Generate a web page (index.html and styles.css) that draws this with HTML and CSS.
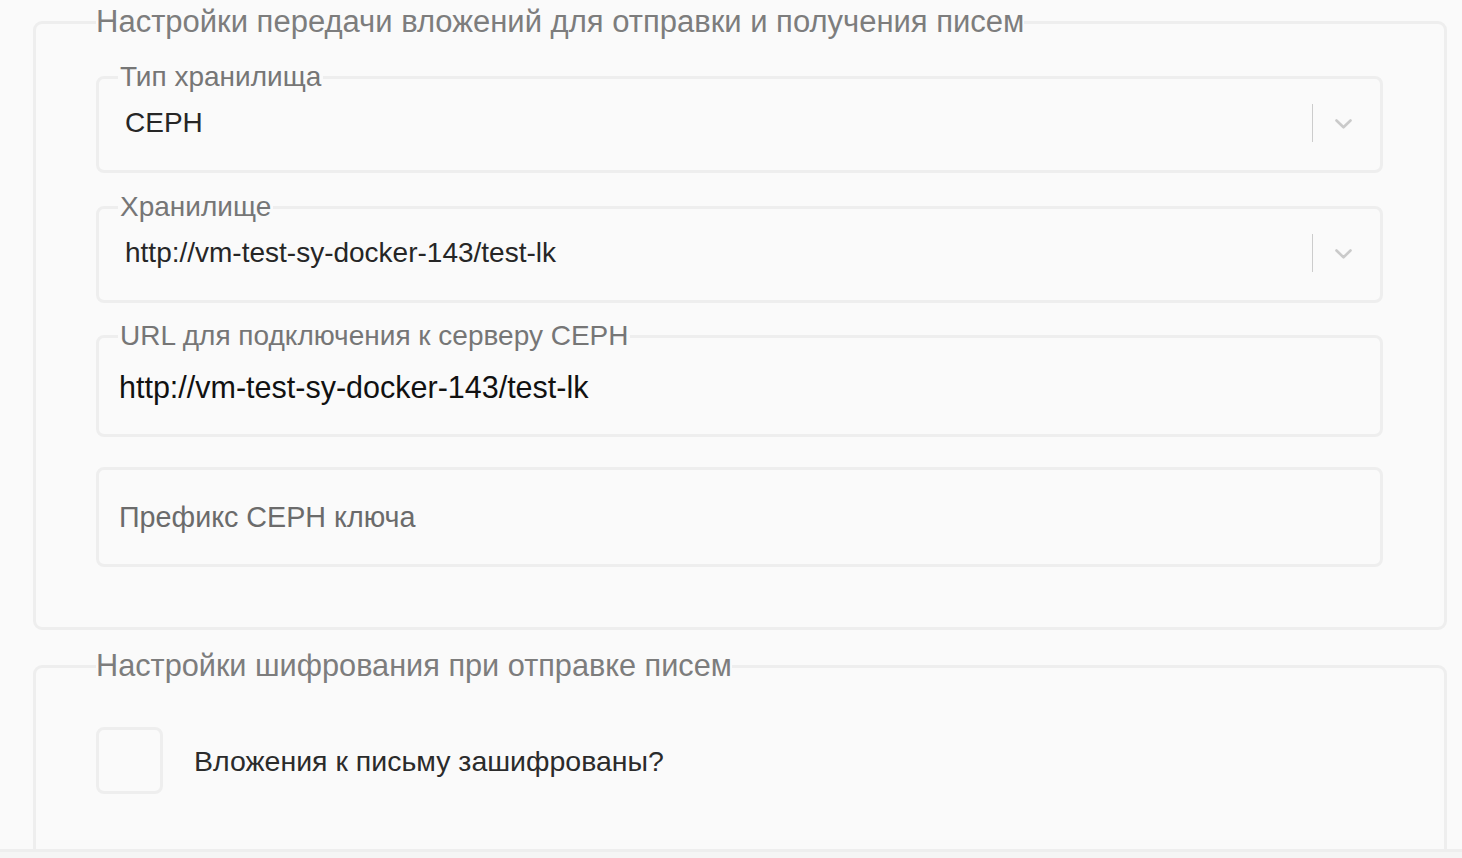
FILE: index.html
```html
<!DOCTYPE html>
<html lang="ru">
<head>
<meta charset="utf-8">
<title>Настройки</title>
<link rel="stylesheet" href="styles.css">
</head>
<body>
<div class="page">
  <fieldset class="group group-attach">
    <legend class="group-title">Настройки передачи вложений для отправки и получения писем</legend>

    <fieldset class="field field-select">
      <legend class="field-label">Тип хранилища</legend>
      <div class="select-row">
        <span class="select-value">CEPH</span>
        <span class="indicators">
          <span class="sep"></span>
          <svg class="chev" width="17" height="10" viewBox="0 0 17 10"><polyline points="1.5,1.5 8.5,8.3 15.5,1.5" fill="none" stroke="#cacaca" stroke-width="2.6" stroke-linecap="round" stroke-linejoin="round"/></svg>
        </span>
      </div>
    </fieldset>

    <fieldset class="field field-select field-storage">
      <legend class="field-label">Хранилище</legend>
      <div class="select-row">
        <span class="select-value">http://vm-test-sy-docker-143/test-lk</span>
        <span class="indicators">
          <span class="sep"></span>
          <svg class="chev" width="17" height="10" viewBox="0 0 17 10"><polyline points="1.5,1.5 8.5,8.3 15.5,1.5" fill="none" stroke="#cacaca" stroke-width="2.6" stroke-linecap="round" stroke-linejoin="round"/></svg>
        </span>
      </div>
    </fieldset>

    <fieldset class="field field-input">
      <legend class="field-label">URL для подключения к серверу CEPH</legend>
      <div class="input-value">http://vm-test-sy-docker-143/test-lk</div>
    </fieldset>

    <div class="field field-plain">
      <div class="placeholder">Префикс CEPH ключа</div>
    </div>
  </fieldset>

  <fieldset class="group group-crypt">
    <legend class="group-title">Настройки шифрования при отправке писем</legend>
    <label class="check-row">
      <span class="checkbox"></span>
      <span class="check-label">Вложения к письму зашифрованы?</span>
    </label>
  </fieldset>
</div>
<div class="footer-bar"></div>
</body>
</html>
```

FILE: styles.css
```css
html, body {
  margin: 0;
  padding: 0;
  background: #fafafa;
  font-family: "Liberation Sans", Arial, Helvetica, sans-serif;
  overflow: hidden;
}

.page {
  height: 849px;
  overflow: hidden;
  padding-top: 4px;
  box-sizing: border-box;
}

.group {
  margin: 0 15px 0 33px;
  border: 3px solid #eeeeee;
  border-radius: 9px;
  padding: 21px 61px 60px 60px;
  min-width: 0;
}

.group-title {
  padding: 0;
  font-size: 31px;
  line-height: 36px;
  color: #7d7d7d;
}

.field {
  margin: 0;
  border: 3px solid #eeeeee;
  border-radius: 8px;
  min-width: 0;
  box-sizing: border-box;
}

.field-label {
  padding: 0 2px;
  font-size: 28px;
  line-height: 32px;
  color: #767676;
}

.field-select {
  padding: 11px 0 28px 19px;
}

.field-storage {
  margin-top: 18px;
}

.select-row {
  display: flex;
  align-items: center;
  height: 38px;
}

.select-value {
  flex: 1;
  margin-left: 7px;
  font-size: 28px;
  line-height: 32px;
  color: #262626;
}

.indicators {
  display: flex;
  align-items: center;
  height: 38px;
}

.sep {
  width: 1px;
  height: 38px;
  background: #cccccc;
}

.chev {
  display: block;
  margin: 1px 28px 0 22px;
}

.field-input {
  margin-top: 17px;
  padding: 19px 19px 31px 19px;
}

.input-value {
  margin-left: 1px;
  font-size: 30.5px;
  line-height: 32px;
  color: #111111;
}

.field-plain {
  margin-top: 30px;
  padding: 31px 19px 31px 20px;
}

.placeholder {
  font-size: 28.7px;
  line-height: 32px;
  color: #6b6b6b;
}

.group-crypt {
  margin-top: 18px;
  padding-top: 43px;
  height: 400px;
}

.group-crypt .group-title {
  font-size: 30.7px;
}

.check-row {
  display: flex;
  align-items: center;
  gap: 31px;
}

.checkbox {
  width: 67px;
  height: 67px;
  box-sizing: border-box;
  border: 3px solid #eeeeee;
  border-radius: 8px;
  flex: none;
}

.check-label {
  font-size: 28.5px;
  line-height: 32px;
  color: #2b2b2b;
}

.footer-bar {
  height: 9px;
  border-top: 3px solid #eeeeee;
  background: #f5f5f5;
}
```
